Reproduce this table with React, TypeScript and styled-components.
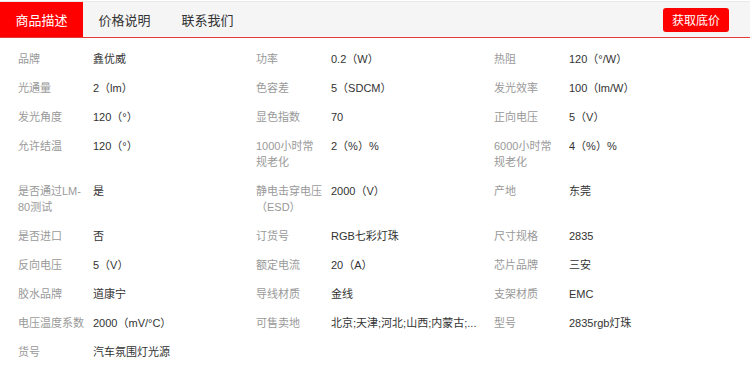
import { Fragment } from "react";
import styled, { createGlobalStyle } from "styled-components";

const GlobalStyle = createGlobalStyle`
  body {
    margin: 0;
    background: #fff;
    font-family: "Liberation Sans", "Noto Sans CJK SC", sans-serif;
  }
`;

const Wrapper = styled.div`
  width: 750px;
`;

const TabBar = styled.div`
  display: flex;
  align-items: center;
  height: 35px;
  margin-top: 1px;
  border-top: 1px solid #e8e8e8;
  border-bottom: 1px solid #e43a3a;
  background: #f5f5f5;
`;

const Tab = styled.div<{ $active?: boolean }>`
  width: 83px;
  height: 100%;
  display: flex;
  align-items: center;
  justify-content: center;
  font-size: 13px;
  color: ${(p) => (p.$active ? "#fff" : "#333")};
  background: ${(p) => (p.$active ? "#ff0000" : "transparent")};
`;

const PriceButton = styled.div`
  margin-left: auto;
  margin-right: 21px;
  width: 66px;
  height: 24px;
  border-radius: 3px;
  background: #ff0000;
  color: #fff;
  font-size: 12px;
  display: flex;
  align-items: center;
  justify-content: center;
`;

const Table = styled.div`
  display: grid;
  grid-template-columns: repeat(3, 75px 163px);
  padding: 7px 0 0 18px;
  font-size: 11px;
  line-height: 16px;
`;

const Label = styled.div`
  color: #999;
  padding: 6px 8px 7px 0;
  word-break: break-all;
`;

const Value = styled.div`
  color: #333;
  padding: 6px 10px 7px 0;
  white-space: nowrap;
  overflow: hidden;
  text-overflow: ellipsis;
`;

const specs: [string, string][] = [
  ["品牌", "鑫优威"],
  ["功率", "0.2（W）"],
  ["热阻", "120（°/W）"],
  ["光通量", "2（lm）"],
  ["色容差", "5（SDCM）"],
  ["发光效率", "100（lm/W）"],
  ["发光角度", "120（°）"],
  ["显色指数", "70"],
  ["正向电压", "5（V）"],
  ["允许结温", "120（°）"],
  ["1000小时常规老化", "2（%）%"],
  ["6000小时常规老化", "4（%）%"],
  ["是否通过LM-\u200B80测试", "是"],
  ["静电击穿电压（ESD）", "2000（V）"],
  ["产地", "东莞"],
  ["是否进口", "否"],
  ["订货号", "RGB七彩灯珠"],
  ["尺寸规格", "2835"],
  ["反向电压", "5（V）"],
  ["额定电流", "20（A）"],
  ["芯片品牌", "三安"],
  ["胶水品牌", "道康宁"],
  ["导线材质", "金线"],
  ["支架材质", "EMC"],
  ["电压温度系数", "2000（mV/°C）"],
  ["可售卖地", "北京;天津;河北;山西;内蒙古;..."],
  ["型号", "2835rgb灯珠"],
  ["货号", "汽车氛围灯光源"],
];

export default function App() {
  return (
    <Wrapper>
      <GlobalStyle />
      <TabBar>
        <Tab $active>商品描述</Tab>
        <Tab>价格说明</Tab>
        <Tab>联系我们</Tab>
        <PriceButton>获取底价</PriceButton>
      </TabBar>
      <Table>
        {specs.map(([label, value]) => (
          <Fragment key={label}>
            <Label>{label}</Label>
            <Value>{value}</Value>
          </Fragment>
        ))}
      </Table>
    </Wrapper>
  );
}
